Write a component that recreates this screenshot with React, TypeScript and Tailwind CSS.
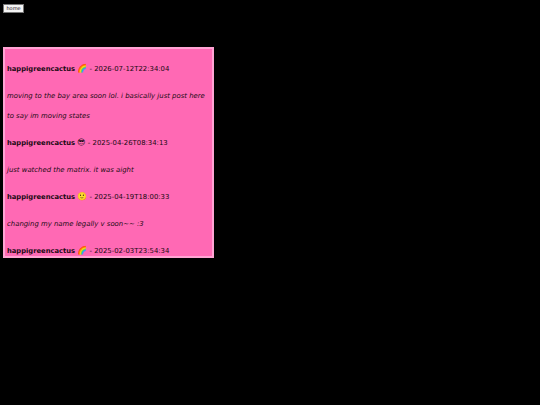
const posts = [
  { mood: '🌈', date: '2026-07-12T22:34:04', text: 'moving to the bay area soon lol. i basically just post here to say im moving states' },
  { mood: '😎', date: '2025-04-26T08:34:13', text: 'just watched the matrix. it was aight' },
  { mood: '🙂', date: '2025-04-19T18:00:33', text: 'changing my name legally v soon~~ :3' },
  { mood: '🌈', date: '2025-02-03T23:54:34', text: '' },
];

export default function App() {
  return (
    <div className="min-h-[405px] bg-black font-['DejaVu_Sans',sans-serif] text-[6.9px] text-[#1a0a12]">
      <div className="px-[3px] pt-[4px]">
        <button className="block h-[9px] w-[21px] border border-[#767676] bg-[#f4f4f4] text-center text-[5px] leading-[7px]">
          home
        </button>
      </div>

      <div className="ml-[3px] mt-[34px] h-[211px] w-[211px] overflow-hidden border-2 border-[#ffa3d3] bg-[#ff69b4] px-[2px] pt-[3px]">
        {posts.map((post) => (
          <div key={post.date}>
            <p className="my-[7px] leading-[20px]">
              <b className="text-[6.75px]">happigreencactus</b> <span className="text-[8px]">{post.mood}</span> - {post.date}
            </p>
            {post.text && <p className="my-[7px] leading-[20px] italic">{post.text}</p>}
          </div>
        ))}
      </div>
    </div>
  );
}
